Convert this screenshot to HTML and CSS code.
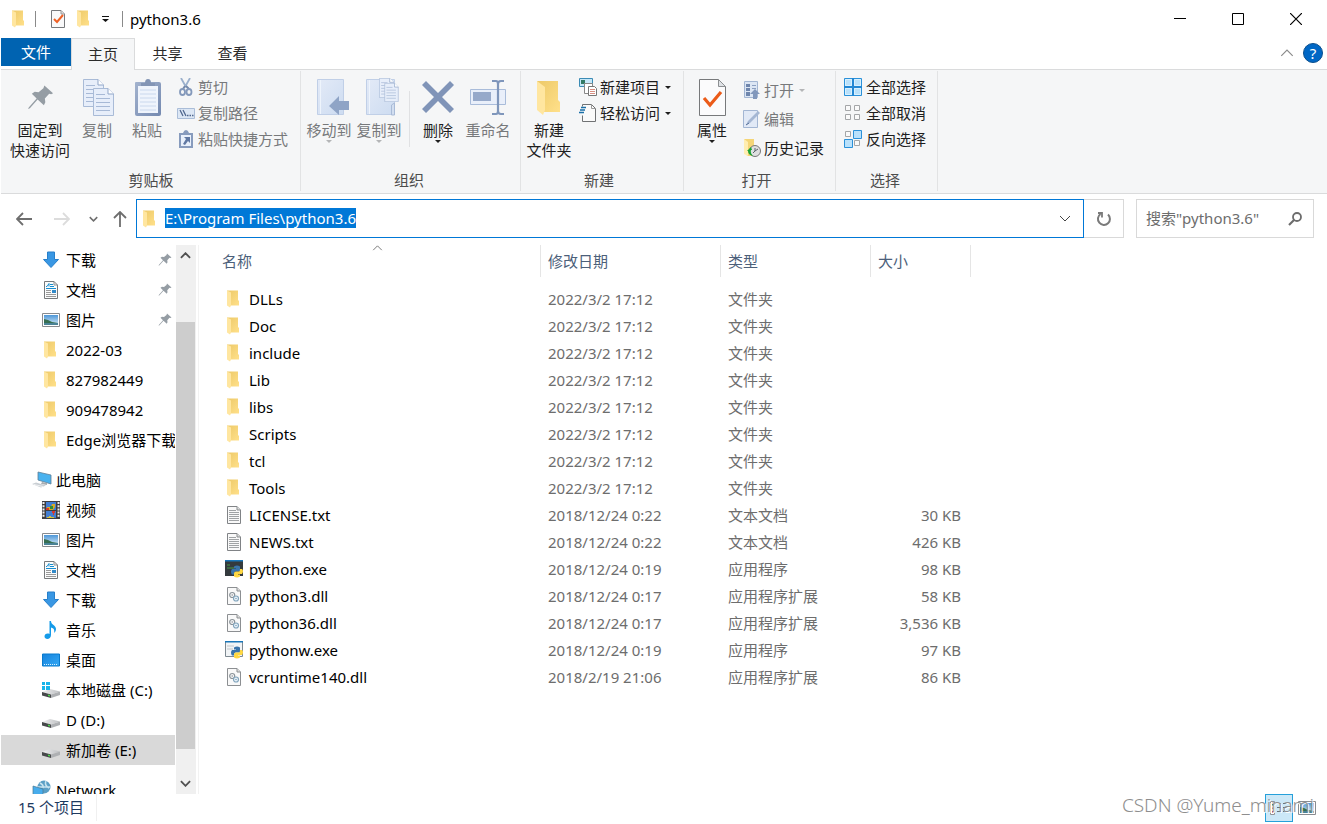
FILE: index.html
```html
<!DOCTYPE html>
<html lang="zh-CN">
<head>
<meta charset="utf-8">
<title>python3.6</title>
<link rel="stylesheet" href="styles.css">
</head>
<body>
<svg class="defs" aria-hidden="true">
  <defs>
    <linearGradient id="gold" x1="0" x2="1" y1="0" y2="1"><stop offset="0" stop-color="#edc968"/><stop offset="1" stop-color="#ffe08a"/></linearGradient>
    <linearGradient id="blue" x1="0" x2="1" y1="0" y2="1"><stop offset="0" stop-color="#1583dd"/><stop offset="1" stop-color="#35a9f5"/></linearGradient>
    <linearGradient id="clip" x1="0" x2="1" y1="0" y2="1"><stop offset="0" stop-color="#a3b3ce"/><stop offset="1" stop-color="#7489b0"/></linearGradient>
    <linearGradient id="pale" x1="0" x2="1" y1="0" y2="1"><stop offset="0" stop-color="#e3eaf7"/><stop offset="1" stop-color="#cddcf1"/></linearGradient>
    <linearGradient id="sky" x1="0" x2="0" y1="0" y2="1"><stop offset="0" stop-color="#4d97d8"/><stop offset="1" stop-color="#d8ecf8"/></linearGradient>
    <linearGradient id="disk" x1="0" x2="1" y1="0" y2="0"><stop offset="0" stop-color="#f1f1f2"/><stop offset="1" stop-color="#bcbec1"/></linearGradient>
  </defs>
  <symbol id="folder" viewBox="0 0 18 18"><path d="M2 .5h11v9.500l1 1v4.500H5z" fill="url(#gold)"/><path d="M2 .5l4 2v13l-1 2-3-2z" fill="#ffe6a0"/></symbol>
  <symbol id="check-page" viewBox="0 0 18 18"><path d="M2.500.5h9.500l3.500 3.500v13.500h-13z" fill="#f9f9fa" stroke="#77797c"/><path d="M12 .5v3.500h3.500" fill="#ddd" stroke="#999"/><path d="M5 9l3 3 6-7" fill="none" stroke="#ee6126" stroke-width="2"/></symbol>
  <symbol id="pin" viewBox="0 0 28 28"><path d="M18 1l9 8-2 1-2-.5-4.500 5 .5 4-1.500 3-6.500-6-8 9-2 1 1-2 8-9-5-5 3-2 4 .500L17 4z" fill="#959da4"/></symbol>
  <symbol id="arrow-down" viewBox="0 0 18 18"><path d="M5.500 1h7v7.500h4L9 16.500 1.500 8.500h4z" fill="#3997e3" stroke="#277fca"/></symbol>
  <symbol id="doc" viewBox="0 0 18 18"><path d="M2.500.5h9.500l3.500 3.500v13.500h-13z" fill="#fbfcfc" stroke="#76797b"/><path d="M12 .5v3.500h3.500" fill="none" stroke="#8b8f91"/><path d="M4 5.500h1l2-3v3M8 3.500h3M8 5.500h4M4 7.500h10" fill="none" stroke="#168dd0"/><path d="M4 9.500h5M4 11.500h5M4 13.500h10M4 15.500h10" stroke="#999"/><path d="M10 9h4v3h-4z" fill="#328ac9"/></symbol>
  <symbol id="photo" viewBox="0 0 18 18"><path d="M.5 2.500h17v13H.5z" fill="#fff" stroke="#888b8f"/><path d="M2 4h14v10H2z" fill="url(#sky)"/><path d="M2 8l4 1 4 2 6 1v1H2z" fill="#376f52"/><path d="M2 12h14v2H2z" fill="#4a8396"/></symbol>
  <symbol id="film" viewBox="0 0 18 18"><path d="M0 0h18v18H0z" fill="#3e3d40"/><path d="M1.500 1v16M16.500 1v16" stroke="#eee" stroke-width="2" stroke-dasharray="2 1.200"/><path d="M4 1h10v8H4zM4 10h10v7H4z" fill="#437ed2"/><path d="M5 6h4l1-3h3v3l-2 3H5z" fill="#d9aa24"/><path d="M4 7h3v2H4zM10 10h3v2h-1v2h-1v-2h-1z" fill="#d9372c"/><path d="M8 5h3v3H8z" fill="#2e8a3a"/><path d="M5 16h2v-1h2v1h3v1H5z" fill="#d8c23b"/></symbol>
  <symbol id="music" viewBox="0 0 18 18"><path d="M7.500 0h1.500c0 4 5 4 5 8 0 2-1 3-2 4 1-4-1-5-3-5.500V14c0 5-6.500 5-6.500 1.500C2.500 13 5 12 7.500 13z" fill="#159be9"/></symbol>
  <symbol id="desktop" viewBox="0 0 18 18"><path d="M.5 3h17v12H.5z" fill="url(#blue)" stroke="#087bcd"/><path d="M2 13.500h14" stroke="#d9f1ff" stroke-dasharray="1 1"/></symbol>
  <symbol id="pc" viewBox="0 0 20 18"><path d="M6 1l13 3v9L6 9z" fill="#49b2ef" stroke="#5f7f95" stroke-width=".8"/><path d="M10 11l5 1v2l-6-1z" fill="#a7adb2"/><path d="M0 13l4-1.500 10 3-5 2z" fill="#c9ced3"/><path d="M2 13.500l9 2" stroke="#fff" stroke-width=".7"/></symbol>
  <symbol id="drive" viewBox="0 0 18 18"><path d="M0 11l8-3 10 2.500-9 3z" fill="url(#disk)"/><path d="M0 11l9 2.500v3.500l-9-2.500z" fill="#47494b"/><path d="M9 13.500l9-3V14l-9 3z" fill="#aeb0b3"/><path d="M6 13.500l2 .7v1.300l-2-.6z" fill="#4be24a"/></symbol>
  <symbol id="drive-win" viewBox="0 0 18 18"><use href="#drive"/><path d="M0 1h3v3H0zM4 1h4v3H4zM0 5h3v4H0zM4 5h4v4H4z" fill="#18b4ea"/></symbol>
  <symbol id="network" viewBox="0 0 20 20"><circle cx="12" cy="7" r="6.500" fill="#5b9fc5"/><path d="M8 3q4 2 3 5M14 1q-2 4 3 7M6 7h12" fill="none" stroke="#c9e4ef" stroke-width="1.500"/><path d="M1 6l10 3v10L1 15z" fill="#47acec" stroke="#477992" stroke-width=".7"/></symbol>
  <symbol id="txt" viewBox="0 0 18 18"><path d="M2.500.5h9.500l3.500 3.500v13.500h-13z" fill="#f9f9f9" stroke="#808386"/><path d="M12 .5v3.500h3.500" fill="#ddd" stroke="#8b8f91"/><path d="M4 4.500h7M4 6.500h10M4 8.500h10M4 10.500h10M4 12.500h10M4 14.500h10" stroke="#a0a3a5"/></symbol>
  <symbol id="dll" viewBox="0 0 18 18"><path d="M2.500.5h9.500l3.500 3.500v13.500h-13z" fill="#f9f9f9" stroke="#8c8f92"/><path d="M12 .5v3.500h3.500" fill="#ddd" stroke="#8b8f91"/><circle cx="7.200" cy="8" r="2.500" fill="none" stroke="#8b9399" stroke-width="1.200"/><circle cx="7.200" cy="8" r=".8" fill="#8b9399"/><circle cx="11" cy="11.500" r="2.500" fill="#eef5fa" stroke="#82a5bd" stroke-width="1.200"/><circle cx="11" cy="11.500" r=".8" fill="#82a5bd"/></symbol>
  <symbol id="snake" viewBox="0 0 12 12"><path d="M3 1q3-2 6 0v5H5q-2 0-2 3H1Q-1 6 1 3.500h4V3H3z" fill="#3974ab"/><path d="M9 3.500h2q2 2 0 5H7V9h2v2q-3 2-6 0V8q0-2 2-2h3q1 0 1-2.500z" fill="#ffd843"/></symbol>
  <symbol id="pyexe" viewBox="0 0 18 18"><path d="M0 0h18v16H0z" fill="#343a3d"/><path d="M0 0h18v1.500H0z" fill="#1976b9"/><path d="M2 5h3M2 8h7" stroke="#46994b"/><use href="#snake" x="6" y="5" width="12" height="13"/></symbol>
  <symbol id="pywexe" viewBox="0 0 18 18"><path d="M.5.500h17v15H.5z" fill="#f1f4f6" stroke="#7e8991"/><path d="M0 0h18v1.500H0z" fill="#1976b9"/><path d="M2 5h7M2 8h6" stroke="#c1c6c9"/><use href="#snake" x="6" y="5" width="12" height="13"/></symbol>
  <symbol id="page" viewBox="0 0 21 28"><path d="M.5.500H15l5.500 5.500v21.500H.5z" fill="#e7eefa" stroke="#a9bbd7"/><path d="M15 .5V6h5.500" fill="#fff" stroke="#8fa5c7"/><path d="M3 6.500h9M3 10.500h14M3 14.500h14M3 18.500h14M3 22.500h14" stroke="#a7b9d6"/></symbol>
  <symbol id="big-copy" viewBox="0 0 40 40"><use href="#page" x="6" y="1" width="21" height="28"/><use href="#page" x="16" y="10" width="21" height="28"/></symbol>
  <symbol id="big-paste" viewBox="0 0 40 40"><path d="M8 5q0-1 1-1h23q2 0 2 2v30q0 2-2 2H10q-2 0-2-2z" fill="url(#clip)"/><path d="M11 8h20v27H11z" fill="#eff4fc"/><path d="M13 12h16M13 16h16M13 20h16M13 24h16M13 28h16M13 32h16" stroke="#cad8ed"/><path d="M14 5h4q0-4 3-4t3 4h4v3H14z" fill="#8395b5"/></symbol>
  <symbol id="big-move" viewBox="0 0 40 40"><path d="M8.500 1.500h26v35h-26z" fill="url(#pale)" stroke="#c0cfe7"/><path d="M11.500 2v34" stroke="#eef4fc"/><path d="M20 28l10-10v5h10v9H30v5z" fill="#8fa4c6"/></symbol>
  <symbol id="big-copyto" viewBox="0 0 40 40"><path d="M7.500 1.500h28v35h-28z" fill="url(#pale)" stroke="#c0cfe7"/><path d="M10.500 2v34" stroke="#eef4fc"/><use href="#page" x="20" y="0" width="15" height="20"/><use href="#page" x="25" y="5" width="15" height="19"/><path d="M32.500 37v-10l3-2v12z" fill="#d2def0" stroke="#a9bbd7"/></symbol>
  <symbol id="big-x" viewBox="0 0 40 40"><path d="M4 7l4-4 12 12L32 3l4 4-12 12 12 12-4 4-12-12L8 35l-4-4 12-12z" fill="#8094b8"/></symbol>
  <symbol id="big-rename" viewBox="0 0 40 40"><path d="M2.500 11.500h35v15h-35z" fill="#e9effa" stroke="#a9bcda"/><path d="M5 14h18v9H5z" fill="#96a9ca"/><path d="M24 3h4q2 0 2 3v27q0 3-2 3h-4M36 3h-3q-3 0-3 3M36 36h-3q-3 0-3-3" fill="none" stroke="#7f96bb" stroke-width="2.200"/></symbol>
  <symbol id="big-folder" viewBox="0 0 40 40"><path d="M8 3h21v19l2 2v10H14z" fill="url(#gold)"/><path d="M8 3l8 6v23l-2 5-6-5z" fill="#ffe6a0"/></symbol>
  <symbol id="big-props" viewBox="0 0 40 40"><path d="M7.500 1.500h19l7 7v29h-26z" fill="#fbfbfc" stroke="#77797b"/><path d="M26.500 1.500v7h7z" fill="#dfe2e6" stroke="#8c8f92"/><path d="M12 20l6 7 11-13" fill="none" stroke="#eb5b19" stroke-width="3.200"/></symbol>
  <symbol id="scissors" viewBox="0 0 18 18"><path d="M4 0l5 9M13 0L8 9" stroke="#9bb0cc" stroke-width="1.800"/><path d="M8 8l-2 3M9 8l3 3" stroke="#7489aa" stroke-width="2"/><ellipse cx="5.500" cy="14" rx="2.500" ry="3" fill="none" stroke="#8499bb" stroke-width="1.800"/><ellipse cx="12" cy="14" rx="2.500" ry="3" fill="none" stroke="#8499bb" stroke-width="1.800"/></symbol>
  <symbol id="path" viewBox="0 0 18 18"><path d="M.5 4.500h17v10H.5z" fill="#dce7f5" stroke="#aabdd8"/><path d="M3 6l3 6M6 6l3 6M10 11.500h1.500M12.500 11.500H14M15 11.500h1.500" stroke="#51688f" stroke-width="1.300"/></symbol>
  <symbol id="paste-link" viewBox="0 0 18 18"><path d="M2 3h4q1-3 3-3t3 3h4v15H2z" fill="#879bbd"/><path d="M4 5h10v11H4z" fill="#e9f0fb"/><path d="M7 7h6v6l-2-2-3 4-2-1 3-5z" fill="#6078a3"/></symbol>
  <symbol id="new-item" viewBox="0 0 18 18"><path d="M.5.500h13v8H.5z" fill="#c5e7f8" stroke="#3b8bb5"/><path d="M2 2h4v4H2z" fill="#327a65"/><path d="M5.500 5.500h8v10h-8z" fill="#fff" stroke="#888"/><path d="M9.500 8.500h6l2 2v7h-8z" fill="#fff" stroke="#777"/><path d="M11 11.500h5M11 13.500h5M11 15.500h5" stroke="#d88f83"/></symbol>
  <symbol id="easy" viewBox="0 0 18 18"><path d="M3.500.500h9l4 4v13h-13v-6M3.500.500v2" fill="#fafafa" stroke="#707274"/><path d="M12.500.500v4h4" fill="none" stroke="#999"/><path d="M2 3.500h5M1 6h5M0 8.500h5" stroke="#1b6fa8" stroke-width="1.500"/></symbol>
  <symbol id="open" viewBox="0 0 18 18"><path d="M1.500.500h13v16h-13z" fill="#dce6f4" stroke="#a3b6d3"/><path d="M3 3h4v3H3zM3 7h4v3H3zM3 11h4v4H3z" fill="#6f86ad"/><path d="M9 4.500h4M9 7.500h4" stroke="#8ba0c2"/><path d="M12 8l5 5h-3v5h-4v-5H7z" fill="#8298bc"/></symbol>
  <symbol id="edit" viewBox="0 0 18 18"><path d="M.5.500h14v17H.5z" fill="#e1e9f6" stroke="#a3b6d3"/><path d="M3 15l2-4L15 1l2 2L7 13z" fill="#a5b7d3"/><path d="M3 15l3-2" stroke="#566f98"/></symbol>
  <symbol id="history" viewBox="0 0 18 18"><path d="M1 0h10v17H4z" fill="#f4d577"/><path d="M1 0l4 3v14l-4-2z" fill="#ffedb1"/><circle cx="12" cy="12" r="5.500" fill="#dedfe0" stroke="#777"/><path d="M12 9v3l3-2M12 12l-2 2" fill="none" stroke="#58646c"/><path d="M4 12l4-4 1 3h-1q-1 3 2 6-5-1-5-5z" fill="#18a334"/></symbol>
  <symbol id="sel-all" viewBox="0 0 18 18"><path d="M.5.500h17v17H.5z" fill="#b9e1fb" stroke="#2b91d9"/><path d="M1.500 1.500h6v6h-6zM10.500 1.500h6v6h-6zM1.500 10.500h6v6h-6zM10.500 10.500h6v6h-6z" fill="none" stroke="#d9f0fe"/><path d="M9 0v18M0 9h18" stroke="#2287d4" stroke-width="2"/></symbol>
  <symbol id="sel-none" viewBox="0 0 18 18"><path d="M1.500 1.500h5v5h-5zM10.500 1.500h5v5h-5zM1.500 10.500h5v5h-5zM10.500 10.500h5v5h-5z" fill="#fafafa" stroke="#a4a6a8"/></symbol>
  <symbol id="sel-inv" viewBox="0 0 18 18"><use href="#sel-none"/><path d="M9.500.500h8v8h-8zM.5 9.500h8v8h-8z" fill="#b9e1fb" stroke="#2b91d9"/></symbol>
  <symbol id="drop" viewBox="0 0 6 3"><path d="M0 0h6L3 3z" fill="currentColor"/></symbol>
  <symbol id="chev" viewBox="0 0 12 7"><path d="M1 1l5 5 5-5" fill="none" stroke="currentColor" stroke-width="var(--w, 1)"/></symbol>
  <symbol id="back" viewBox="0 0 16 14"><path d="M1 7h15M7 1L1 7l6 6" fill="none" stroke="currentColor" stroke-width="1.800"/></symbol>
</svg>

<header class="titlebar">
  <svg class="i18"><use href="#folder"/></svg>
  <span class="tick-sep"></span>
  <button class="quick" aria-label="属性"><svg class="i18"><use href="#check-page"/></svg></button>
  <button class="quick" aria-label="新建文件夹"><svg class="i18"><use href="#folder"/></svg></button>
  <button class="quick quick-more" aria-label="自定义快速访问工具栏"><svg width="7" height="6" viewBox="0 0 7 6"><path d="M0 .5h7" stroke="#111"/><path d="M0 3h7L3.500 6z" fill="#111"/></svg></button>
  <span class="tick-sep"></span>
  <h1 class="title">python3.6</h1>
  <div class="window-buttons">
    <button aria-label="最小化"><svg width="12" height="12"><path d="M0 5.500h12" stroke="#000"/></svg></button>
    <button aria-label="最大化"><svg width="12" height="12"><path d="M.5.500h11v11H.5z" fill="none" stroke="#000"/></svg></button>
    <button aria-label="关闭"><svg width="12" height="12"><path d="M0 0l12 12M12 0L0 12" stroke="#000" stroke-width="1.200"/></svg></button>
  </div>
</header>

<nav class="tabs">
  <button class="tab tab-file">文件</button>
  <button class="tab tab-active">主页</button>
  <button class="tab">共享</button>
  <button class="tab">查看</button>
  <div class="tabs-end">
    <button class="collapse" aria-label="最小化功能区"><svg class="flip" width="14" height="8"><use href="#chev"/></svg></button>
    <button class="help" aria-label="帮助">?</button>
  </div>
</nav>

<section class="ribbon">
  <div class="group group-clipboard">
    <div class="tools">
      <button class="big w64"><svg class="i40" viewBox="0 0 40 40"><use href="#pin" x="7" y="6" width="27" height="28"/></svg>固定到<br>快速访问</button>
      <button class="big w50 off"><svg class="i40"><use href="#big-copy"/></svg>复制</button>
      <button class="big w50 off"><svg class="i40"><use href="#big-paste"/></svg>粘贴</button>
      <div class="small-list">
        <button class="small off"><svg class="i18"><use href="#scissors"/></svg>剪切</button>
        <button class="small off"><svg class="i18"><use href="#path"/></svg>复制路径</button>
        <button class="small off"><svg class="i18"><use href="#paste-link"/></svg>粘贴快捷方式</button>
      </div>
    </div>
    <div class="caption">剪贴板</div>
  </div>
  <div class="group group-organize">
    <div class="tools">
      <button class="big w50 off"><svg class="i40"><use href="#big-move"/></svg>移动到<svg class="drop"><use href="#drop"/></svg></button>
      <button class="big w50 off"><svg class="i40"><use href="#big-copyto"/></svg>复制到<svg class="drop"><use href="#drop"/></svg></button>
      <span class="inner-sep"></span>
      <button class="big w50"><svg class="i40"><use href="#big-x"/></svg>删除<svg class="drop"><use href="#drop"/></svg></button>
      <button class="big w50 off"><svg class="i40"><use href="#big-rename"/></svg>重命名</button>
    </div>
    <div class="caption">组织</div>
  </div>
  <div class="group group-new">
    <div class="tools">
      <button class="big w56"><svg class="i40"><use href="#big-folder"/></svg>新建<br>文件夹</button>
      <div class="small-list">
        <button class="small"><svg class="i18"><use href="#new-item"/></svg>新建项目<svg class="drop"><use href="#drop"/></svg></button>
        <button class="small"><svg class="i18"><use href="#easy"/></svg>轻松访问<svg class="drop"><use href="#drop"/></svg></button>
      </div>
    </div>
    <div class="caption">新建</div>
  </div>
  <div class="group group-open">
    <div class="tools">
      <button class="big w56"><svg class="i40"><use href="#big-props"/></svg>属性<svg class="drop"><use href="#drop"/></svg></button>
      <div class="small-list loose">
        <button class="small off"><svg class="i18"><use href="#open"/></svg>打开<svg class="drop"><use href="#drop"/></svg></button>
        <button class="small off"><svg class="i18"><use href="#edit"/></svg>编辑</button>
        <button class="small"><svg class="i18"><use href="#history"/></svg>历史记录</button>
      </div>
    </div>
    <div class="caption">打开</div>
  </div>
  <div class="group group-select">
    <div class="tools">
      <div class="small-list">
        <button class="small"><svg class="i18"><use href="#sel-all"/></svg>全部选择</button>
        <button class="small"><svg class="i18"><use href="#sel-none"/></svg>全部取消</button>
        <button class="small"><svg class="i18"><use href="#sel-inv"/></svg>反向选择</button>
      </div>
    </div>
    <div class="caption">选择</div>
  </div>
</section>

<div class="navbar">
  <div class="nav-buttons">
    <button aria-label="返回"><svg width="16" height="14"><use href="#back"/></svg></button>
    <button class="faint" aria-label="前进"><svg class="flip" width="16" height="14"><use href="#back"/></svg></button>
    <button class="recent" aria-label="最近浏览的位置"><svg class="heavy" width="9" height="6"><use href="#chev"/></svg></button>
    <button aria-label="上移"><svg width="14" height="16" viewBox="0 0 14 16"><path d="M7 1v15M1 7l6-6 6 6" fill="none" stroke="currentColor" stroke-width="1.800"/></svg></button>
  </div>
  <div class="address">
    <svg class="i18"><use href="#folder"/></svg>
    <input id="address" type="text" aria-label="地址" value="E:\Program Files\python3.6" spellcheck="false">
    <button class="address-drop" aria-label="以前的位置"><svg width="12" height="7"><use href="#chev"/></svg></button>
  </div>
  <button class="refresh" aria-label="刷新"><svg width="16" height="16" viewBox="0 0 16 16"><path d="M12 3.500a6 6 0 1 1-7.500-.500" fill="none" stroke="#7a7a7a" stroke-width="2"/><path d="M2 2h4v4.500" fill="none" stroke="#7a7a7a" stroke-width="1.800"/></svg></button>
  <div class="search">
    <input type="search" aria-label="搜索" placeholder="搜索&quot;python3.6&quot;">
    <button aria-label="搜索"><svg width="14" height="14" viewBox="0 0 14 14"><circle cx="9" cy="5" r="4" fill="none" stroke="#6c6c6c" stroke-width="1.800"/><path d="M6 8l-5 5" stroke="#6c6c6c" stroke-width="2.200"/></svg></button>
  </div>
</div>

<main class="main">
  <aside class="sidebar">
    <a href="#"><svg class="i18"><use href="#arrow-down"/></svg>下载<svg class="pin"><use href="#pin"/></svg></a>
    <a href="#"><svg class="i18"><use href="#doc"/></svg>文档<svg class="pin"><use href="#pin"/></svg></a>
    <a href="#"><svg class="i18"><use href="#photo"/></svg>图片<svg class="pin"><use href="#pin"/></svg></a>
    <a href="#"><svg class="i18"><use href="#folder"/></svg>2022-03</a>
    <a href="#"><svg class="i18"><use href="#folder"/></svg>827982449</a>
    <a href="#"><svg class="i18"><use href="#folder"/></svg>909478942</a>
    <a href="#"><svg class="i18"><use href="#folder"/></svg>Edge浏览器下载</a>
    <a href="#" class="root"><svg class="i20"><use href="#pc"/></svg>此电脑</a>
    <a href="#"><svg class="i18"><use href="#film"/></svg>视频</a>
    <a href="#"><svg class="i18"><use href="#photo"/></svg>图片</a>
    <a href="#"><svg class="i18"><use href="#doc"/></svg>文档</a>
    <a href="#"><svg class="i18"><use href="#arrow-down"/></svg>下载</a>
    <a href="#"><svg class="i18"><use href="#music"/></svg>音乐</a>
    <a href="#"><svg class="i18"><use href="#desktop"/></svg>桌面</a>
    <a href="#"><svg class="i18"><use href="#drive-win"/></svg>本地磁盘 (C:)</a>
    <a href="#"><svg class="i18"><use href="#drive"/></svg>D (D:)</a>
    <a href="#" class="current"><svg class="i18"><use href="#drive"/></svg>新加卷 (E:)</a>
    <a href="#" class="root"><svg class="i20"><use href="#network"/></svg>Network</a>
  </aside>
  <div class="scrollbar">
    <button aria-label="向上滚动"><svg class="flip heavy" width="11" height="7"><use href="#chev"/></svg></button>
    <div class="track"><div class="thumb"></div></div>
    <button aria-label="向下滚动"><svg class="heavy" width="11" height="7"><use href="#chev"/></svg></button>
  </div>
  <div class="files">
    <table>
      <colgroup><col class="c-name"><col class="c-date"><col class="c-type"><col class="c-size"></colgroup>
      <thead><tr><th>名称<svg class="sort flip" width="11" height="6"><use href="#chev"/></svg></th><th>修改日期</th><th>类型</th><th>大小</th></tr></thead>
      <tbody>
        <tr><td><span class="file"><svg class="i18"><use href="#folder"/></svg>DLLs</span></td><td>2022/3/2 17:12</td><td>文件夹</td><td></td></tr>
        <tr><td><span class="file"><svg class="i18"><use href="#folder"/></svg>Doc</span></td><td>2022/3/2 17:12</td><td>文件夹</td><td></td></tr>
        <tr><td><span class="file"><svg class="i18"><use href="#folder"/></svg>include</span></td><td>2022/3/2 17:12</td><td>文件夹</td><td></td></tr>
        <tr><td><span class="file"><svg class="i18"><use href="#folder"/></svg>Lib</span></td><td>2022/3/2 17:12</td><td>文件夹</td><td></td></tr>
        <tr><td><span class="file"><svg class="i18"><use href="#folder"/></svg>libs</span></td><td>2022/3/2 17:12</td><td>文件夹</td><td></td></tr>
        <tr><td><span class="file"><svg class="i18"><use href="#folder"/></svg>Scripts</span></td><td>2022/3/2 17:12</td><td>文件夹</td><td></td></tr>
        <tr><td><span class="file"><svg class="i18"><use href="#folder"/></svg>tcl</span></td><td>2022/3/2 17:12</td><td>文件夹</td><td></td></tr>
        <tr><td><span class="file"><svg class="i18"><use href="#folder"/></svg>Tools</span></td><td>2022/3/2 17:12</td><td>文件夹</td><td></td></tr>
        <tr><td><span class="file"><svg class="i18"><use href="#txt"/></svg>LICENSE.txt</span></td><td>2018/12/24 0:22</td><td>文本文档</td><td>30 KB</td></tr>
        <tr><td><span class="file"><svg class="i18"><use href="#txt"/></svg>NEWS.txt</span></td><td>2018/12/24 0:22</td><td>文本文档</td><td>426 KB</td></tr>
        <tr><td><span class="file"><svg class="i18"><use href="#pyexe"/></svg>python.exe</span></td><td>2018/12/24 0:19</td><td>应用程序</td><td>98 KB</td></tr>
        <tr><td><span class="file"><svg class="i18"><use href="#dll"/></svg>python3.dll</span></td><td>2018/12/24 0:17</td><td>应用程序扩展</td><td>58 KB</td></tr>
        <tr><td><span class="file"><svg class="i18"><use href="#dll"/></svg>python36.dll</span></td><td>2018/12/24 0:17</td><td>应用程序扩展</td><td>3,536 KB</td></tr>
        <tr><td><span class="file"><svg class="i18"><use href="#pywexe"/></svg>pythonw.exe</span></td><td>2018/12/24 0:19</td><td>应用程序</td><td>97 KB</td></tr>
        <tr><td><span class="file"><svg class="i18"><use href="#dll"/></svg>vcruntime140.dll</span></td><td>2018/2/19 21:06</td><td>应用程序扩展</td><td>86 KB</td></tr>
      </tbody>
    </table>
  </div>
</main>

<footer class="status">
  <span class="count">15 个项目</span>
  <div class="views">
    <button class="view view-on" aria-label="详细信息"><svg width="18" height="14" viewBox="0 0 18 14"><path d="M.5.500h4v13h-4z" fill="#fff" stroke="#8f9498"/><path d="M2 3h1.500v1.500H2z" fill="#3a8b46"/><path d="M2 6.500h1.500V8H2z" fill="#c99a2e"/><path d="M2 10h1.500v1.500H2z" fill="#b53a2b"/><path d="M7 2.500h4M13 2.500h4M7 6.500h4M13 6.500h4M7 10.500h4M13 10.500h4" stroke="#6b7378"/></svg></button>
    <button class="view" aria-label="大缩略图"><svg width="18" height="18"><use href="#photo"/></svg></button>
  </div>
  <span class="watermark">CSDN @Yume_minami</span>
</footer>
<script src="script.js"></script>
</body>
</html>
```
FILE: styles.css
```css
* { box-sizing: border-box; }
html, body { height: 100%; }
body {
  margin: 0;
  padding-left: 1px;
  display: flex;
  flex-direction: column;
  overflow: hidden;
  background: #fff;
  color: #000;
  font: 15px/20px "Noto Sans", "Noto Sans CJK SC", sans-serif;
}
svg { display: block; flex: none; }
.defs { position: absolute; width: 0; height: 0; }
button { border: 0; padding: 0; background: none; color: inherit; font: inherit; }
input { border: 0; padding: 0; background: none; color: inherit; font: inherit; outline: 0; min-width: 0; }
.i18 { width: 18px; height: 18px; }
.i20 { width: 20px; height: 20px; }
.i40 { width: 40px; height: 40px; }
.flip { transform: rotate(180deg); }
.heavy { --w: 2; }

/* title bar */
.titlebar { display: flex; align-items: center; height: 38px; padding-left: 9px; flex: none; }
.tick-sep { width: 1px; height: 16px; background: #8a8a8a; margin: 0 9px 0 7px; }
.quick { padding: 0 4px; }
.quick-more { padding: 0 6px 0 5px; }
.title { margin: 0 0 0 -2px; font-size: 15px; font-weight: 400; }
.window-buttons { display: flex; margin-left: auto; padding-right: 2px; }
.window-buttons button { width: 58px; height: 38px; display: grid; place-items: center; }

/* tabs */
.tabs { display: flex; height: 32px; flex: none; border-bottom: 1px solid #dadbdc; }
.tab { width: 65px; height: 30px; color: #2b2b2b; }
.tab-file { width: 70px; height: 28px; background: #0063b1; color: #fff; }
.tab-active { width: 64px; height: 32px; padding-bottom: 2px; background: #f5f6f7; border: 1px solid #dadbdc; border-bottom: 0; }
.tabs-end { display: flex; align-items: center; height: 30px; gap: 9px; margin-left: auto; padding-right: 4px; }
.collapse { color: #8a8a8a; }
.help { width: 20px; height: 20px; border-radius: 50%; background: #0067c5; border: 1px solid #0b4f8d; color: #fff; line-height: 18px; }

/* ribbon */
.ribbon { display: flex; height: 124px; flex: none; background: #f5f6f7; border-bottom: 1px solid #dadbdc; }
.group { display: flex; flex-direction: column; justify-content: space-between; padding-top: 7px; margin: 1px 0 2px; border-right: 1px solid #e2e3e4; }
.group-clipboard { width: 300px; padding-left: 7px; }
.group-organize { width: 220px; padding-left: 3px; }
.group-new { width: 163px; }
.group-open { width: 152px; }
.group-select { width: 102px; padding-left: 3px; }
.tools { display: flex; color: #1e1e1e; }
.big { display: flex; flex-direction: column; align-items: center; justify-content: flex-start; align-self: flex-start; white-space: nowrap; }
.big .i40 { margin-bottom: 2px; }
.w50 { width: 50px; }
.w56 { width: 56px; }
.w64 { width: 64px; }
.off { color: #77797b; }
.off .drop { color: #b4b5b7; }
.drop { width: 6px; height: 3px; }
.inner-sep { width: 1px; height: 56px; margin: 13px 3px 0 5px; background: #e0e1e3; }
.small-list { display: flex; flex-direction: column; gap: 6px; padding-left: 5px; margin-top: -1px; }
.small-list.loose { gap: 9px; padding-top: 3px; padding-left: 3px; }
.group-new .small-list { padding-left: 2px; }
.small { display: flex; align-items: center; gap: 3px; height: 20px; white-space: nowrap; }
.group-select .small { gap: 4px; }
.small .drop { margin-left: 2px; }
.caption { padding-right: 6px; margin-bottom: 1px; text-align: center; color: #4c4c4c; }

/* address row */
.navbar { display: flex; height: 51px; flex: none; padding: 5px 13px 7px 15px; }
.nav-buttons { display: flex; align-items: center; width: 120px; gap: 22px; color: #6e6e6e; }
.nav-buttons .faint { color: #dcdcdc; }
.nav-buttons .recent { margin-right: -7px; margin-left: -3px; }
.address { flex: 1; display: flex; align-items: center; border: 1px solid #0078d7; padding-left: 4px; }
.address input { flex: 1; height: 20px; margin: 0 0 2px 6px; }
.address input::selection { background: #0078d7; color: #fff; }
.address-drop { width: 36px; height: 36px; display: grid; place-items: center; color: #444; }
.refresh { width: 40px; display: grid; place-items: center; border: 1px solid #d9d9d9; border-left: 0; }
.search { display: flex; align-items: center; width: 178px; margin-left: 12px; padding: 0 11px 0 9px; border: 1px solid #d9d9d9; }
.search input { flex: 1; margin-bottom: 2px; }
.search input::placeholder { color: #6d6d6d; opacity: 1; }

/* main */
.main { display: flex; flex: 1; min-height: 0; }
.sidebar { width: 175px; overflow: hidden; flex: none; }
.sidebar a { display: flex; align-items: center; gap: 6px; height: 30px; padding-left: 41px; margin-right: 1px; color: #000; text-decoration: none; white-space: nowrap; overflow: hidden; }
.sidebar a.root { margin-top: 10px; padding-left: 31px; gap: 4px; }
.sidebar a.current { background: #d9d9d9; }
.sidebar .pin { width: 14px; height: 14px; margin-left: auto; margin-right: 3px; }
.scrollbar { display: flex; flex-direction: column; width: 20px; flex: none; background: #f0f0f0; color: #505050; }
.scrollbar button { height: 21px; display: grid; place-items: center; padding-right: 2px; }
.track { flex: 1; display: flex; flex-direction: column; padding: 56px 1px 24px 0; }
.thumb { flex: 1; background: #cdcdcd; }
.files { flex: 1; margin-left: 2px; border-left: 1px solid #f2f2f2; }

table { table-layout: fixed; width: 772px; border-spacing: 0; color: #6d6d6d; }
.c-name { width: 342px; }
.c-date { width: 180px; }
.c-type { width: 150px; }
.c-size { width: 100px; }
th { position: relative; height: 32px; padding: 0 7px; text-align: left; font-weight: 400; color: #4c607a; border-right: 1px solid #e5e5e5; }
th:first-child { padding-left: 23px; }
.sort { position: absolute; left: 173px; top: 0; color: #666; }
tbody::before { content: ""; display: block; height: 8px; }
td { height: 27px; padding: 0 7px; white-space: nowrap; }
td:first-child { padding-left: 26px; color: #000; }
td:last-child { padding-right: 10px; text-align: right; }
.file { display: flex; align-items: center; gap: 6px; }

/* status bar */
.status { position: relative; display: flex; align-items: flex-start; height: 30px; flex: none; padding-right: 6px; }
.count { padding: 3px 12px 4px 17px; color: #1e3a5f; border-right: 1px solid #f0f0f0; }
.views { display: flex; margin-left: auto; }
.view { width: 28px; height: 28px; display: grid; place-items: center; }
.view-on { background: #cce8f7; border: 1px solid #26a0da; }
.watermark { position: absolute; right: 13px; top: 0; font-size: 19px; line-height: 22px; color: #8e8e8e; text-shadow: 1px 1px 0 #fff; font-weight: 300; }
```
FILE: script.js
```js
const address = document.getElementById("address");
address.focus();
address.select();
```
